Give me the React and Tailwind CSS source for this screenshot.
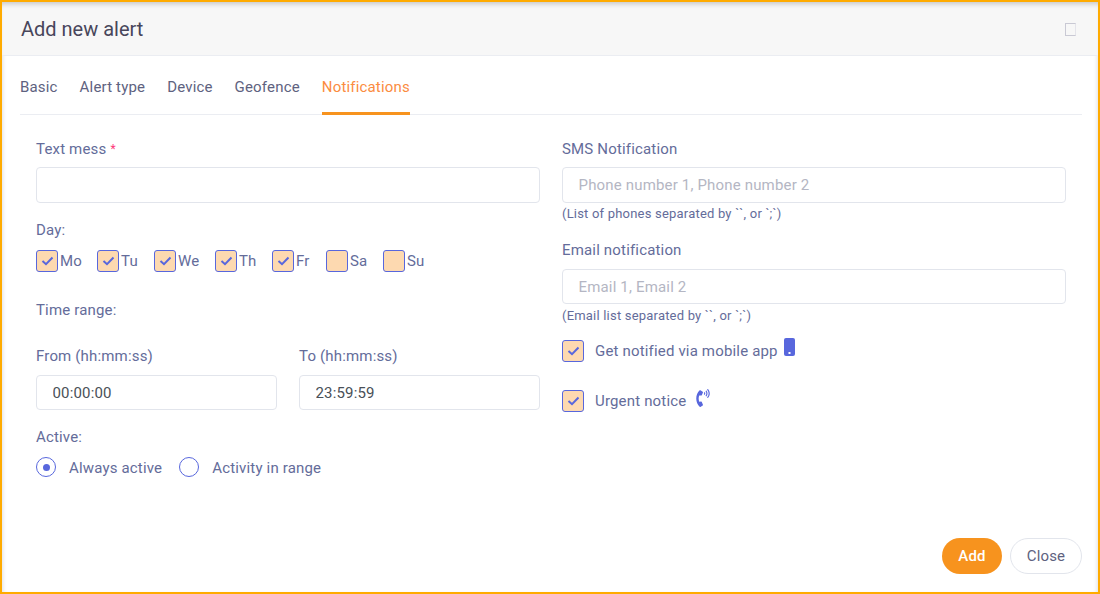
import { FaPhoneVolume } from "react-icons/fa";

const tabs = ["Basic", "Alert type", "Device", "Geofence", "Notifications"];
const days = [
  { label: "Mo", on: true, w: "w-[61px]" },
  { label: "Tu", on: true, w: "w-[57px]" },
  { label: "We", on: true, w: "w-[61px]" },
  { label: "Th", on: true, w: "w-[57px]" },
  { label: "Fr", on: true, w: "w-[54px]" },
  { label: "Sa", on: false, w: "w-[57px]" },
  { label: "Su", on: false, w: "w-[57px]" },
];

function Check({ on }) {
  return (
    <span className="flex h-[22px] w-[22px] shrink-0 items-center justify-center rounded-[3px] border border-[#5867dd] bg-[#fdd9b0]">
      {on && (
        <svg width="13" height="10" viewBox="0 0 13 10" fill="none">
          <path d="M1.5 5 L5 8.2 L11.5 1.5" stroke="#5867dd" strokeWidth="2" />
        </svg>
      )}
    </span>
  );
}

function Field({ placeholder, value, short }) {
  return (
    <input
      readOnly
      placeholder={placeholder}
      value={value}
      className={`block ${short ? "h-[35px] pt-px" : "h-[36px]"} w-full rounded-[4px] border border-[#e2e5ec] bg-white px-[15.5px] text-[15px] tracking-[0.17px] text-[#495057] outline-none placeholder:text-[#b4b6c3]`}
    />
  );
}

function Radio({ on, label }) {
  return (
    <div className="flex items-center">
      <span className="-mt-px flex h-[20px] w-[20px] items-center justify-center rounded-full border border-[#5867dd]">
        {on && <span className="h-[7px] w-[7px] rounded-full bg-[#5867dd]" />}
      </span>
      <span className="ml-[13px]">{label}</span>
    </div>
  );
}

export default function App() {
  return (
    <div className="flex h-[594px] w-[1100px] flex-col overflow-hidden border-2 border-[#ffab00] bg-white font-['Roboto',sans-serif] text-[15px] tracking-[0.17px] text-[#646c9a] shadow-[inset_4px_0_4px_-3px_rgba(0,0,0,0.12),inset_-4px_0_4px_-3px_rgba(0,0,0,0.12)]">
      <div className="flex h-[54px] shrink-0 items-center border-b border-[#ebedf2] bg-[#f7f7f7] pl-[19px] pr-[18px] shadow-[inset_0_5px_5px_-3px_rgba(0,0,0,0.2)]">
        <h1 className="text-[20px] leading-none tracking-normal text-[#48465b]">Add new alert</h1>
        <span className="ml-auto mr-[4px] mt-[1px] h-[13px] w-[11px] border border-[#c9c9d4] border-r-[#e4e4ea]" />
      </div>

      <div className="ml-[18px] mr-[16px] mt-[16px] flex h-[43px] shrink-0 gap-[22px] border-b border-[#ebedf2]">
        {tabs.map((t) => (
          <div
            key={t}
            className={
              t === "Notifications"
                ? "-mb-px h-[43px] border-b-[3px] border-[#f7931e] pt-[4px] text-[#fb8c3f]"
                : "pt-[4px] text-[#5e6280]"
            }
          >
            {t}
          </div>
        ))}
      </div>

      <div className="ml-[34px] mr-[32px] mt-[25px] grid grid-cols-2 gap-x-[22px]">
        <div>
          <div className="flex h-[18px] items-center">
            Text mess <span className="ml-[4px] text-[12px] text-[#fd397a]">*</span>
          </div>
          <div className="mt-[9px]">
            <Field />
          </div>
          <div className="mt-[18px] leading-[18px]">Day:</div>
          <div className="mt-[11px] flex">
            {days.map((d) => (
              <div key={d.label} className={`${d.w} flex items-center gap-[2px]`}>
                <Check on={d.on} />
                <span>{d.label}</span>
              </div>
            ))}
          </div>
          <div className="mt-[28px] leading-[18px]">Time range:</div>
          <div className="mt-[28px] grid grid-cols-[241px_241px] gap-x-[22px]">
            <div>
              <div className="leading-[18px]">From (hh:mm:ss)</div>
              <div className="mt-[10px]">
                <Field short value="00:00:00" />
              </div>
            </div>
            <div>
              <div className="leading-[18px]">To (hh:mm:ss)</div>
              <div className="mt-[10px]">
                <Field short value="23:59:59" />
              </div>
            </div>
          </div>
          <div className="mt-[18px] leading-[18px]">Active:</div>
          <div className="mt-[11px] flex gap-[17px]">
            <Radio on label="Always active" />
            <Radio label="Activity in range" />
          </div>
        </div>

        <div>
          <div className="flex h-[18px] items-center">SMS Notification</div>
          <div className="mt-[9px]">
            <Field placeholder="Phone number 1, Phone number 2" />
          </div>
          <div className="mt-[3px] text-[13px] tracking-[0.2px] leading-[16px]">{"(List of phones separated by ``, or `;`)"}</div>
          <div className="mt-[19px] leading-[18px]">Email notification</div>
          <div className="mt-[10px]">
            <Field short placeholder="Email 1, Email 2" />
          </div>
          <div className="mt-[4px] text-[13px] tracking-[0.2px] leading-[16px]">{"(Email list separated by ``, or `;`)"}</div>
          <div className="mt-[16px] flex items-center">
            <Check on />
            <span className="ml-[11px]">Get notified via mobile app</span>
            <svg className="ml-[6px] -mt-[8px]" width="11" height="18" viewBox="0 0 11 18">
              <path d="M2 0H9a2 2 0 0 1 2 2V16a2 2 0 0 1-2 2H2a2 2 0 0 1-2-2V2a2 2 0 0 1 2-2Z" fill="#5867dd" />
              <rect x="4.5" y="14" width="2" height="2" fill="#fff" />
            </svg>
          </div>
          <div className="mt-[27px] flex items-center">
            <Check on />
            <span className="ml-[11px]">Urgent notice</span>
            <FaPhoneVolume className="ml-[8px] -mt-[6px] text-[18px] text-[#5867dd]" />
          </div>
        </div>
      </div>

      <div className="mt-auto flex justify-end gap-[8px] pb-[18px] pr-[16px]">
        <button className="h-[36px] w-[60px] rounded-full bg-[#f7931e] font-medium text-white">Add</button>
        <button className="h-[36px] w-[72px] rounded-full border border-[#e2e5ec] bg-white text-[#5e6280]">Close</button>
      </div>
    </div>
  );
}
